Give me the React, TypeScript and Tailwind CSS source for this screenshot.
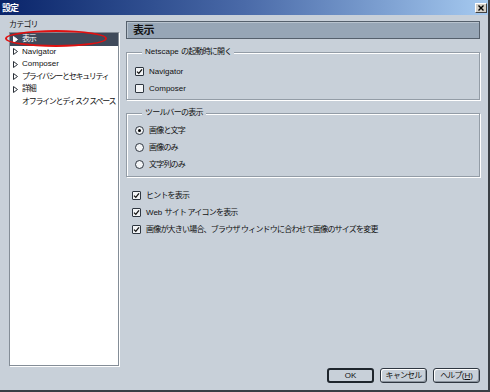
import React from 'react';

const Tri = ({ light }: { light?: boolean }) => (
  <svg width="5" height="7" viewBox="0 0 5 7" className="shrink-0">
    <path d="M0.5 0.5 L4.5 3.5 L0.5 6.5 Z" fill={light ? '#ffffff' : 'none'} stroke={light ? '#ffffff' : '#2a3038'} strokeWidth="1" />
  </svg>
);

const CheckBox = ({ checked }: { checked?: boolean }) => (
  <span className="w-[9px] h-[9px] shrink-0 border border-[#2e3640] bg-[#f2f4f6] rounded-[1px] flex items-center justify-center">
    {checked && (
      <svg width="7" height="7" viewBox="0 0 7 7">
        <path d="M1 3.6 L2.8 5.4 L6 1.4" stroke="#111" strokeWidth="1.3" fill="none" />
      </svg>
    )}
  </span>
);

const Radio = ({ checked }: { checked?: boolean }) => (
  <span className="w-[9px] h-[9px] shrink-0 border border-[#2e3640] bg-[#f2f4f6] rounded-full flex items-center justify-center">
    {checked && <span className="w-[3px] h-[3px] rounded-full bg-black" />}
  </span>
);

const categories = [
  { label: '表示', arrow: true, selected: true },
  { label: 'Navigator', arrow: true },
  { label: 'Composer', arrow: true },
  { label: 'プライバシーとセキュリティ', arrow: true },
  { label: '詳細', arrow: true },
  { label: 'オフラインとディスク スペース', arrow: false },
];

const App: React.FC = () => {
  return (
    <div className="w-[490px] h-[392px] flex flex-col bg-[#c8d0d9] border-r-2 border-b-2 border-[#3a3f45] text-[8px] leading-[12px] text-[#111] whitespace-nowrap font-['Liberation_Sans','Noto_Sans_CJK_JP',sans-serif]">
      {/* title bar */}
      <div className="h-[15px] flex items-center justify-between pl-[2px] pr-[1px] bg-gradient-to-r from-[#0a246a] via-[#4a6aa8] to-[#a6caf0]">
        <span className="text-white text-[9px] font-bold tracking-[-1px]">設定</span>
        <span className="w-[12px] h-[10px] bg-[#d4d0c8] border border-[#404040] border-t-white border-l-white flex items-center justify-center">
          <svg width="6" height="6" viewBox="0 0 6 6">
            <path d="M0.5 0.5 L5.5 5.5 M5.5 0.5 L0.5 5.5" stroke="#000" strokeWidth="1.4" />
          </svg>
        </span>
      </div>

      <div className="flex-1 flex pl-[9px] pr-[8px] gap-[7px]">
        {/* left column */}
        <div className="w-[110px] shrink-0 flex flex-col relative">
          <div className="mt-[4px] h-[12px] tracking-[-0.8px]">カテゴリ</div>
          <div className="mt-[1px] mb-[24px] flex-1 bg-white border border-[#848d97] shadow-[1px_1px_0_#ffffff] flex flex-col overflow-hidden">
            {categories.map((c) => (
              <div
                key={c.label}
                className={`h-[12.5px] shrink-0 flex items-center gap-[4px] pl-[3px] ${c.selected ? 'bg-[#3f4a5b] text-white' : ''}`}
              >
                {c.arrow ? <Tri light={c.selected} /> : <span className="w-[5px] shrink-0" />}
                <span className={/^[A-Za-z]/.test(c.label) ? '' : 'tracking-[-1.3px]'}>{c.label}</span>
              </div>
            ))}
          </div>
          <div className="absolute left-[-4px] top-[15px] w-[102px] h-[17px] rounded-[50%] border-2 border-[#e01010]" />
        </div>

        {/* right column */}
        <div className="flex-1 flex flex-col">
          <div className="mt-[6px] h-[18px] flex items-center pl-[6px] bg-[#97a6b6] border border-[#55606c] shadow-[inset_1px_1px_0_#b8c3ce]">
            <span className="text-[11px] font-bold tracking-[-0.5px]">表示</span>
          </div>

          <fieldset className="mt-[7px] border border-[#939ca6] shadow-[inset_1px_1px_0_#ffffff,1px_1px_0_#ffffff] pl-[8px] pt-[5px] pb-[2px]">
            <legend className="ml-[7px] px-[3px] leading-[12px] bg-[#c8d0d9]">
              Netscape <span className="tracking-[-0.8px]">の起動時に開く</span>
            </legend>
            <div className="h-[17px] flex items-center gap-[5px]">
              <CheckBox checked />
              <span>Navigator</span>
            </div>
            <div className="h-[17px] flex items-center gap-[5px]">
              <CheckBox />
              <span>Composer</span>
            </div>
          </fieldset>

          <fieldset className="mt-[7px] border border-[#939ca6] shadow-[inset_1px_1px_0_#ffffff,1px_1px_0_#ffffff] pl-[8px] pt-[3px] pb-[3px]">
            <legend className="ml-[7px] px-[3px] leading-[12px] bg-[#c8d0d9] tracking-[-0.8px]">ツールバーの表示</legend>
            <div className="h-[17px] flex items-center gap-[5px]">
              <Radio checked />
              <span className="tracking-[-0.8px]">画像と文字</span>
            </div>
            <div className="h-[17px] flex items-center gap-[5px]">
              <Radio />
              <span className="tracking-[-0.8px]">画像のみ</span>
            </div>
            <div className="h-[17px] flex items-center gap-[5px]">
              <Radio />
              <span className="tracking-[-0.8px]">文字列のみ</span>
            </div>
          </fieldset>

          <div className="mt-[10px] pl-[6px] flex flex-col">
            <div className="h-[17px] flex items-center gap-[5px]">
              <CheckBox checked />
              <span className="tracking-[-0.8px]">ヒントを表示</span>
            </div>
            <div className="h-[17px] flex items-center gap-[5px]">
              <CheckBox checked />
              <span>
                Web <span className="tracking-[-0.8px]">サイト アイコンを表示</span>
              </span>
            </div>
            <div className="h-[17px] flex items-center gap-[5px]">
              <CheckBox checked />
              <span className="tracking-[-0.8px]">画像が大きい場合、ブラウザ ウィンドウに合わせて画像のサイズを変更</span>
            </div>
          </div>

          <div className="flex-1" />

          <div className="flex justify-end gap-[6px] mb-[7px]">
            <button className="w-[47px] h-[15px] rounded-[3px] border-2 border-[#1e252c] bg-[#c8d0d9] leading-[11px]">OK</button>
            <button className="w-[47px] h-[15px] rounded-[3px] border border-[#2e3640] bg-[#c8d0d9] shadow-[inset_1px_1px_0_#ffffff,inset_-1px_-1px_0_#8a939d] leading-[13px] tracking-[-0.8px]">キャンセル</button>
            <button className="w-[47px] h-[15px] rounded-[3px] border border-[#2e3640] bg-[#c8d0d9] shadow-[inset_1px_1px_0_#ffffff,inset_-1px_-1px_0_#8a939d] leading-[13px]">
              <span className="tracking-[-0.8px]">ヘルプ</span>(<span className="underline">H</span>)
            </button>
          </div>
        </div>
      </div>
    </div>
  );
};

export default App;
